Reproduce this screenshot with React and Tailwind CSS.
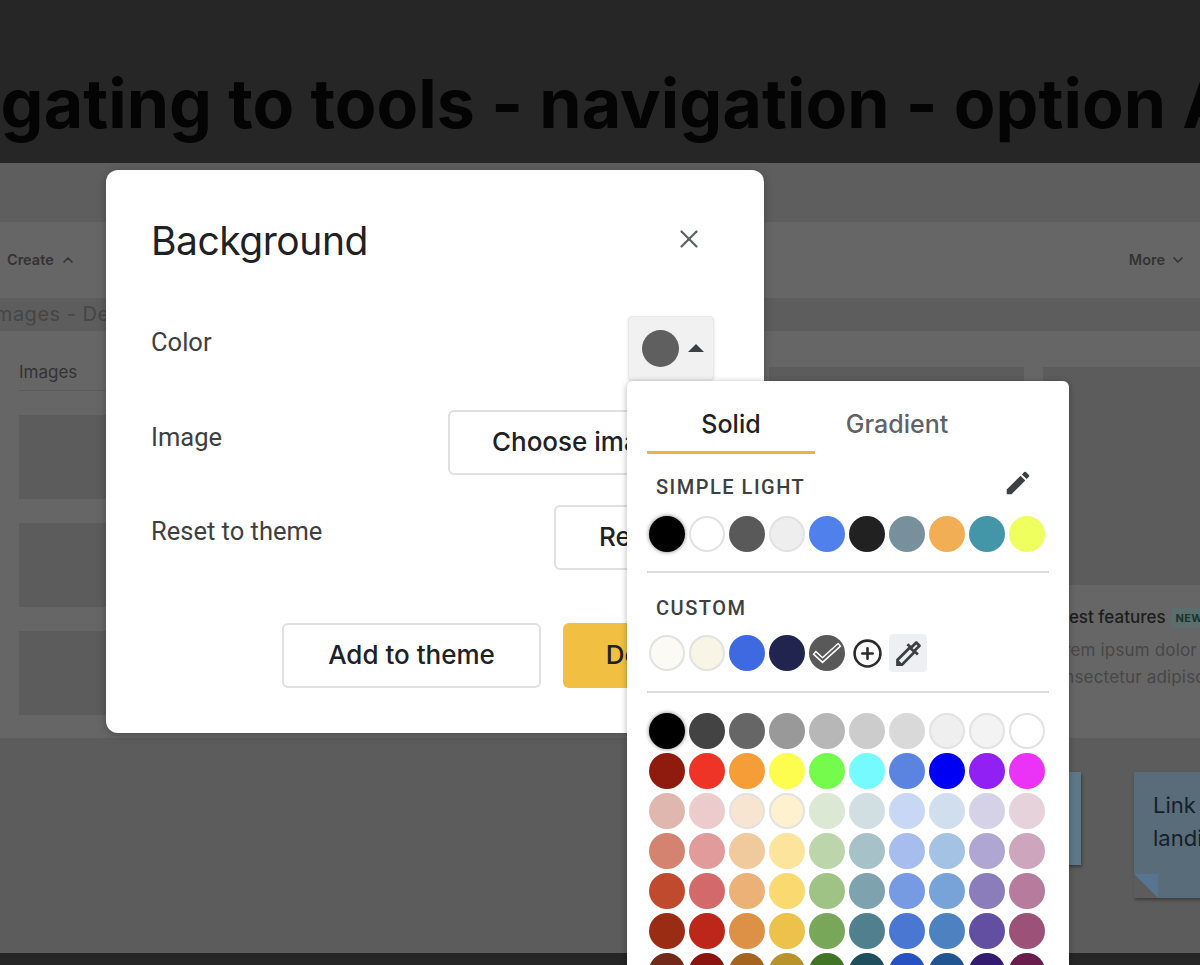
import { CirclePlus, ChevronUp, ChevronDown, X } from 'lucide-react';
import { MdEdit, MdOutlineColorize } from 'react-icons/md';

const ring = 'border-2 border-[#e2e2e2]';

const THEME_COLORS = [
  'bg-[#000000] shadow-[0_0_4px_rgba(0,0,0,0.5)]',
  `bg-[#ffffff] ${ring}`,
  'bg-[#595959]',
  `bg-[#eeeeee] ${ring}`,
  'bg-[#4f80ec]',
  'bg-[#212121]',
  'bg-[#78909c]',
  'bg-[#f2ae54]',
  'bg-[#4396a8]',
  'bg-[#eeff5e]',
];

const CUSTOM_COLORS = [`bg-[#fbfaf5] ${ring}`, `bg-[#f8f4e6] ${ring}`, 'bg-[#3f69e0]', 'bg-[#20244f]'];

const PALETTE = [
  'bg-[#000000] shadow-[0_0_4px_rgba(0,0,0,0.5)]', 'bg-[#434343]', 'bg-[#666666]', 'bg-[#999999]', 'bg-[#b7b7b7]',
  'bg-[#cccccc]', 'bg-[#d9d9d9]', `bg-[#efefef] ${ring}`, `bg-[#f3f3f3] ${ring}`, `bg-[#ffffff] ${ring}`,
  'bg-[#8f1a0e]', 'bg-[#ee3426]', 'bg-[#f59e37]', 'bg-[#fdfd4e]', 'bg-[#75fb4c]',
  'bg-[#75fbfd]', 'bg-[#5b84e0]', 'bg-[#0000f5]', 'bg-[#9120f5]', 'bg-[#ea33f7]',
  'bg-[#e0b7ae]', 'bg-[#eccbcc]', `bg-[#f8e5d1] ${ring}`, `bg-[#fdf1d0] ${ring}`, 'bg-[#dbe8d4]',
  'bg-[#d1dfe3]', 'bg-[#c8d7f4]', 'bg-[#d1deee]', 'bg-[#d5d1e6]', 'bg-[#e5d2da]',
  'bg-[#d48370]', 'bg-[#e09b9a]', 'bg-[#f0c99d]', 'bg-[#fce49c]', 'bg-[#bcd5ab]',
  'bg-[#a6c1c8]', 'bg-[#a6bded]', 'bg-[#a4c2e3]', 'bg-[#b0a6d3]', 'bg-[#cda5bd]',
  'bg-[#bf4a2e]', 'bg-[#d26a69]', 'bg-[#ecb176]', 'bg-[#fbd971]', 'bg-[#9fc384]',
  'bg-[#7fa3ae]', 'bg-[#769be3]', 'bg-[#78a3d8]', 'bg-[#8b7cbc]', 'bg-[#b67b9d]',
  'bg-[#9a2c14]', 'bg-[#bc271a]', 'bg-[#dc9147]', 'bg-[#ecc24a]', 'bg-[#78a75a]',
  'bg-[#50808d]', 'bg-[#4a77d2]', 'bg-[#4d82c0]', 'bg-[#634fa2]', 'bg-[#9c5178]',
  'bg-[#73291a]', 'bg-[#8a1510]', 'bg-[#a5641f]', 'bg-[#b8932c]', 'bg-[#417525]',
  'bg-[#1f4e5c]', 'bg-[#2752c2]', 'bg-[#215591]', 'bg-[#331c70]', 'bg-[#691d4c]',
];

const inter = "font-['Inter',sans-serif]";
const roboto = "font-['Roboto',sans-serif]";

function Swatch({ color }) {
  return <div className={`w-9 h-9 rounded-full shrink-0 ${color}`} />;
}

function OutlineButton({ className, children }) {
  return (
    <button className={`h-[65px] border-2 border-[#e0e0e0] rounded-md bg-white text-[26px] font-medium text-[#202124] ${inter} ${className}`}>
      {children}
    </button>
  );
}

function ColorPopover() {
  return (
    <div className="absolute left-[627px] top-[381px] w-[442px] h-[620px] bg-white rounded-md px-5 shadow-[0_1px_6px_rgba(0,0,0,0.3)]">
      <div className={`flex h-[73px] text-[25px] font-medium ${inter}`}>
        <div className="w-[168px] pt-[25px] text-center text-[#202124] border-b-[3px] border-[#eab24a]">Solid</div>
        <div className="w-[164px] pt-[25px] text-center text-[#5f6368]">Gradient</div>
      </div>

      <div className="flex justify-between items-start mt-[18px] h-[30px] pl-[9px] pr-4">
        <span className={`pt-[3px] text-[20px] leading-6 font-medium tracking-[0.075em] text-[#3c4043] ${roboto}`}>SIMPLE LIGHT</span>
        <MdEdit size={30} className="text-[#3c4043] -mt-1" />
      </div>
      <div className="flex gap-1 ml-0.5 mt-[14px]">
        {THEME_COLORS.map((c, i) => <Swatch key={i} color={c} />)}
      </div>
      <div className="h-0.5 bg-[#dcdcdc] mt-[19px]" />

      <div className={`mt-[23px] pl-[9px] text-[20px] leading-6 font-medium tracking-[0.075em] text-[#3c4043] ${roboto}`}>CUSTOM</div>
      <div className="flex gap-1 ml-0.5 mt-[15px]">
        {CUSTOM_COLORS.map((c, i) => <Swatch key={i} color={c} />)}
        <div className="w-9 h-9 rounded-full bg-[#595959] flex items-center justify-center">
          <svg width="30" height="24" viewBox="0 0 30 24" fill="none">
            <path d="M4 13l6.5 6L26 5" stroke="#ffffff" strokeWidth="5" strokeLinecap="square" />
            <path d="M4 13l6.5 6L26 5" stroke="#595959" strokeWidth="2" strokeLinecap="square" />
          </svg>
        </div>
        <div className="w-9 h-9 flex items-center justify-center">
          <CirclePlus size={31} strokeWidth={2} className="text-[#2b2b2b]" />
        </div>
        <div className="w-[38px] h-[38px] -mt-px rounded bg-[#eeeff2] flex items-center justify-center">
          <MdOutlineColorize size={33} className="text-[#3c4043]" />
        </div>
      </div>
      <div className="h-0.5 bg-[#dcdcdc] mt-[19px]" />

      <div className="grid grid-cols-[repeat(10,36px)] gap-1 ml-0.5 mt-5">
        {PALETTE.map((c, i) => <Swatch key={i} color={c} />)}
      </div>
    </div>
  );
}

function BackgroundDialog() {
  return (
    <div className="absolute left-[106px] top-[170px] w-[658px] h-[563px] bg-white rounded-xl pl-[45px] pr-[50px] pt-[46px] shadow-[0_2px_10px_rgba(0,0,0,0.25)]">
      <div className="flex justify-between items-center h-[50px]">
        <h2 className={`text-[39px] leading-[50px] tracking-[-0.012em] text-[#202124] ${inter}`}>Background</h2>
        <X size={30} strokeWidth={1.8} className="text-[#5f6368] mr-[10px] -mt-1" />
      </div>

      <div className={`text-[25.5px] leading-[30px] text-[#3c4043] ${roboto}`}>
        <div className="flex justify-between items-start mt-[50px] h-16">
          <span className="pt-[11px]">Color</span>
          <button className="w-[86px] h-16 rounded bg-[#f1f1f1] border border-[#e8e8e8] flex items-center pl-[13px] gap-[9px] shadow-[0_1px_3px_rgba(0,0,0,0.12)]">
            <span className="w-[37px] h-[37px] rounded-full bg-[#5f5f5f]" />
            <span className="w-0 h-0 border-x-[8px] border-x-transparent border-b-[8px] border-b-[#3c4043]" />
          </button>
        </div>
        <div className="flex justify-between items-start mt-[30px] h-[65px]">
          <span className="pt-3">Image</span>
          <OutlineButton className="w-[266px] pb-px">Choose image</OutlineButton>
        </div>
        <div className="flex justify-between items-start mt-[30px] h-[65px]">
          <span className="pt-[11px]">Reset to theme</span>
          <OutlineButton className="w-40 pb-px">Reset</OutlineButton>
        </div>
      </div>

      <div className="flex justify-end gap-[22px] mt-[53px]">
        <OutlineButton className="w-[259px] pb-[3px]">Add to theme</OutlineButton>
        <button className={`w-[151px] h-[65px] pb-[3px] rounded-md bg-[#f1bf42] text-[26px] font-medium text-[#202124] ${inter}`}>Done</button>
      </div>
    </div>
  );
}

// the dimmed page behind the dialog
function PageBehind() {
  return (
    <div className={`flex flex-col h-full ${inter}`}>
      <header className="h-[163px] shrink-0 bg-[#262626] overflow-hidden flex items-center">
        <h1 className="-ml-[149px] mt-[43px] text-[68px] font-bold leading-none tracking-[0.001em] whitespace-nowrap text-[#040404]">
          Navigating to tools - navigation - option A
        </h1>
      </header>
      <div className="h-[59px] shrink-0 bg-[#5e5e5e]" />
      <nav className="h-[76px] shrink-0 bg-[#666666] flex justify-between items-center pl-[7px] pr-[14px] text-[14.5px] font-semibold text-[#333333]">
        <span className="flex items-center gap-1.5">Create <ChevronUp size={16} strokeWidth={2.5} /></span>
        <span className="flex items-center gap-[5px]">More <ChevronDown size={16} strokeWidth={2.5} /></span>
      </nav>
      <div className="h-[33px] shrink-0 bg-[#5d5d5d] -indent-[11px] text-[20px] leading-[33px] tracking-wide text-[#464646] whitespace-nowrap overflow-hidden">
        Images - Design
      </div>

      <main className="h-[407px] shrink-0 bg-[#666666] flex overflow-hidden">
        <div className="w-[769px] shrink-0 pl-[19px] pt-[29px]">
          <div className="h-[31px] border-b border-[#5c5c5c] text-[17px] text-[#333333]">Images</div>
          <div className="flex flex-col gap-6 mt-[24px]">
            <div className="w-[200px] h-[84px] bg-[#5c5c5c]" />
            <div className="w-[200px] h-[84px] bg-[#5c5c5c]" />
            <div className="w-[200px] h-[84px] bg-[#5c5c5c]" />
          </div>
        </div>
        <div className="flex-1 pt-9">
          <div className="flex gap-[19px] h-[218px]">
            <div className="w-[255px] shrink-0 bg-[#5c5c5c]" />
            <div className="w-[255px] shrink-0 bg-[#5c5c5c]" />
          </div>
          <div className="pl-[275px] pt-[23px] whitespace-nowrap">
            <div className="flex items-center gap-[6px] h-5 text-[17px] font-medium text-[#1c1c1c]">
              Latest features
              <span className="px-1 text-[11px] font-bold leading-5 tracking-wide bg-[#5c6e6c] text-[#17352f]">NEW</span>
            </div>
            <p className="mt-[9px] text-[17px] leading-[27px] tracking-[0.01em] text-[#474747]">
              Lorem ipsum dolor sit<br />consectetur adipiscing
            </p>
          </div>
        </div>
      </main>

      <section className="flex-1 bg-[#5c5c5c] flex overflow-hidden pt-[34px] pl-[961px]">
        <div className="w-[120px] h-[93px] shrink-0 bg-[#5e7888] shadow-[1px_2px_3px_rgba(0,0,0,0.35)]" />
        <div className="relative ml-[53px] w-[200px] h-[126px] shrink-0 bg-[#586c7a] pl-[19px] pt-[17px] text-[22px] leading-[33px] text-[#15202b] shadow-[1px_2px_3px_rgba(0,0,0,0.35)]">
          Link to<br />landing
          <svg className="absolute left-0 bottom-0" width="24" height="24" viewBox="0 0 24 24">
            <path d="M0 0H24V24Z" fill="#577490" />
            <path d="M0 0L24 24H0Z" fill="#5c5c5c" />
          </svg>
        </div>
      </section>
      <footer className="h-3 shrink-0 bg-[#262626]" />
    </div>
  );
}

export default function App() {
  return (
    <div className="relative w-[1200px] h-[965px] overflow-hidden bg-[#5c5c5c]">
      <PageBehind />
      <BackgroundDialog />
      <ColorPopover />
    </div>
  );
}
